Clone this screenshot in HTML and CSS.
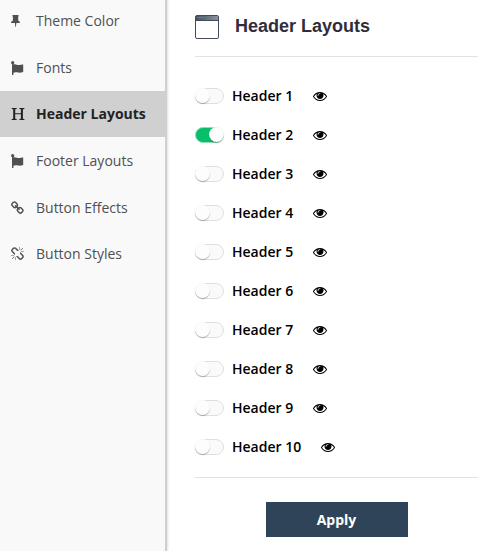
FILE: index.html
```html
<!DOCTYPE html>
<html lang="en">
<head>
<meta charset="utf-8">
<title>Header Layouts</title>
<link rel="stylesheet" href="styles.css">
</head>
<body>
<svg class="defs" aria-hidden="true">
  <symbol id="eye" viewBox="0 0 1792 1792"><path d="M1664 960q-152-236-381-353 61 104 61 225 0 185-131.5 316.5t-316.5 131.5-316.5-131.5-131.5-316.5q0-121 61-225-229 117-381 353 133 205 333.5 326.5t434.5 121.5 434.5-121.5 333.5-326.5zm-720-384q0-20-14-34t-34-14q-125 0-214.5 89.5t-89.5 214.5q0 20 14 34t34 14 34-14 14-34q0-86 61-147t147-61q20 0 34-14t14-34zm848 384q0 34-20 69-140 230-376.5 368.5t-499.5 138.5-499.5-139-376.5-368q-20-35-20-69t20-69q140-229 376.5-368t499.5-139 499.5 139 376.5 368q20 35 20 69z"/></symbol>
  <symbol id="flag" viewBox="0 0 14 14"><circle cx="1.700" cy="1.700" r="1.600"/><path d="M1 2h1.400v12H1zM2.400 3.600c2.200-.9 3.400.5 5.400.5 1.800 0 2.800-.7 4.400-.7v7.700c-2 .5-3.300.7-5 .4-2-.4-3.200-.5-4.800.3z"/></symbol>
</svg>
<div class="app">
  <nav class="sidebar">
    <a class="item"><svg class="icon" viewBox="0 0 14 14"><path d="M1.500 1h6v1.400H7.200v4c1 .4 1.800 1.200 1.800 2.600H5.400L4.800 13h-.4L3.900 9H0c0-1.400.8-2.200 1.900-2.600v-4h-.4z"/></svg><span>Theme Color</span></a>
    <a class="item"><svg class="icon"><use href="#flag"/></svg><span>Fonts</span></a>
    <a class="item active"><svg class="icon" viewBox="0 0 14 14"><path d="M.7 1h5v.9l-1.500.3v4h5.700v-4L8.400 1.900V1h5v.9l-1.500.3v9.600l1.500.3v.9h-5v-.9l1.500-.3V7.200H4.200v4.600l1.500.3v.9h-5v-.9l1.500-.3V2.200L.7 1.900z"/></svg><span>Header Layouts</span></a>
    <a class="item"><svg class="icon"><use href="#flag"/></svg><span>Footer Layouts</span></a>
    <a class="item"><svg class="icon" viewBox="80 0 1792 1792"><path d="M1520 1216q0-40-28-68l-208-208q-28-28-68-28-42 0-72 32 3 3 19 18.500t21.500 21.500 15 19 13 25.500 3.500 27.500q0 40-28 68t-68 28q-15 0-27.500-3.500t-25.500-13-19-15-21.500-21.500-18.500-19q-33 31-33 73 0 40 28 68l206 207q27 27 68 27 40 0 68-26l147-146q28-28 28-67zm-703-705q0-40-28-68l-206-207q-28-28-68-28-39 0-68 27l-147 146q-28 28-28 67 0 40 28 68l208 208q27 27 68 27 42 0 72-31-3-3-19-18.500t-21.500-21.500-15-19-13-25.500-3.500-27.500q0-40 28-68t68-28q15 0 27.500 3.500t25.500 13 19 15 21.500 21.500 18.500 19q33-31 33-73zm895 705q0 120-85 203l-147 146q-83 83-203 83-121 0-204-85l-206-207q-83-83-83-203 0-123 88-209l-88-88q-86 88-208 88-120 0-204-84l-208-208q-84-84-84-204t85-203l147-146q83-83 203-83 121 0 204 85l206 207q83 83 83 203 0 123-88 209l88 88q86-88 208-88 120 0 204 84l208 208q84 84 84 204z"/></svg><span>Button Effects</span></a>
    <a class="item"><svg class="icon" viewBox="0 0 1792 1792"><path d="M439 1271l-256 256q-11 9-23 9t-23-9q-9-10-9-23t9-23l256-256q10-9 23-9t23 9q9 10 9 23t-9 23zm169 41v320q0 14-9 23t-23 9-23-9-9-23v-320q0-14 9-23t23-9 23 9 9 23zm-224-224q0 14-9 23t-23 9h-320q-14 0-23-9t-9-23 9-23 23-9h320q14 0 23 9t9 23zm1264 128q0 120-85 203l-147 146q-83 83-203 83-121 0-204-85l-334-335q-21-21-42-56l239-18 273 274q28 28 68 28.500t68-27.500l147-146q28-28 28-67 0-40-28-68l-274-275 18-239q35 21 56 42l336 336q84 86 84 204zm-617-724l-239 18-273-274q-28-28-68-28-39 0-68 27l-147 146q-28 28-28 67 0 40 28 68l274 274-18 240q-35-21-56-42l-336-336q-84-86-84-204 0-120 85-203l147-146q83-83 203-83 121 0 204 85l334 335q21 21 42 56zm633 84q0 14-9 23t-23 9h-320q-14 0-23-9t-9-23 9-23 23-9h320q14 0 23 9t9 23zm-544-544v320q0 14-9 23t-23 9-23-9-9-23v-320q0-14 9-23t23-9 23 9 9 23zm407 151l-256 256q-11 9-23 9t-23-9q-9-10-9-23t9-23l256-256q10-9 23-9t23 9q9 10 9 23t-9 23z"/></svg><span>Button Styles</span></a>
  </nav>
  <main class="panel">
    <header class="heading">
      <svg class="window" viewBox="0 0 24 24"><defs><linearGradient id="bar"><stop stop-color="#46515f"/><stop offset="1" stop-color="#8b949e"/></linearGradient></defs><rect x=".5" y=".5" width="23" height="23" rx="1.500" fill="#fff" stroke="#414b59"/><path fill="url(#bar)" d="M1 1h22v4H1z"/><path stroke="#414b59" d="M1 5.500h22"/><path stroke="#8c959f" stroke-dasharray="1 1" d="M2.500 2.500h6"/></svg>
      <h1>Header Layouts</h1>
    </header>
    <div class="options">
      <div class="option"><i class="switch"></i><span>Header 1</span><svg class="eye"><use href="#eye"/></svg></div>
      <div class="option"><i class="switch on"></i><span>Header 2</span><svg class="eye"><use href="#eye"/></svg></div>
      <div class="option"><i class="switch"></i><span>Header 3</span><svg class="eye"><use href="#eye"/></svg></div>
      <div class="option"><i class="switch"></i><span>Header 4</span><svg class="eye"><use href="#eye"/></svg></div>
      <div class="option"><i class="switch"></i><span>Header 5</span><svg class="eye"><use href="#eye"/></svg></div>
      <div class="option"><i class="switch"></i><span>Header 6</span><svg class="eye"><use href="#eye"/></svg></div>
      <div class="option"><i class="switch"></i><span>Header 7</span><svg class="eye"><use href="#eye"/></svg></div>
      <div class="option"><i class="switch"></i><span>Header 8</span><svg class="eye"><use href="#eye"/></svg></div>
      <div class="option"><i class="switch"></i><span>Header 9</span><svg class="eye"><use href="#eye"/></svg></div>
      <div class="option"><i class="switch"></i><span>Header 10</span><svg class="eye"><use href="#eye"/></svg></div>
    </div>
    <footer class="actions"><button class="apply">Apply</button></footer>
  </main>
</div>
</body>
</html>
```
FILE: styles.css
```css
* { box-sizing: border-box; }
body { margin: 0; background: #fff; font: 14px/20px "Open Sans", sans-serif; overflow: hidden; }
.defs { position: absolute; width: 0; height: 0; }
.app { display: flex; height: 551px; }
.sidebar {
  width: 167px;
  background: #f9f9f9;
  border-right: 2px solid #d0d0d0;
  box-shadow: 1px 0 2px rgba(0, 0, 0, .12);
  margin-top: -2.300px;
}
.item {
  display: flex;
  align-items: center;
  gap: 11px;
  height: 46.667px;
  padding-left: 11px;
  color: #505050;
}
.item.active { background: #d0d0d0; color: #222; font-weight: 700; height: 46px; margin-bottom: .667px; }
.icon { width: 14px; height: 14px; fill: currentColor; }
.panel { width: 283px; margin-left: 28px; }
.heading {
  display: flex;
  align-items: center;
  gap: 16px;
  height: 57px;
  padding-bottom: 3px;
  border-bottom: 1px solid #e2e2e2;
}
.window { width: 24px; height: 24px; }
h1 { margin: 0 0 2px; font: 700 18px/22px "Liberation Sans", sans-serif; color: #2f2d3b; }
.options { padding: 19px 0 11px; border-bottom: 1px solid #e2e2e2; }
.option { display: flex; align-items: center; height: 39px; font-weight: 600; color: #000; }
.switch {
  width: 29px;
  height: 16px;
  margin-right: 8px;
  border: 1px solid #dfdfdf;
  border-radius: 8px;
  background: #fafafa;
}
.switch::before {
  content: "";
  display: block;
  width: 15px;
  height: 15px;
  margin: -1px 0 0 -1px;
  border-radius: 50%;
  background: #fdfdfd;
  box-shadow: 0 1px 1px rgba(0, 0, 0, .28);
}
.switch.on { background: #06bf68; border-color: #8fdcb7; }
.switch.on::before { margin-left: 13px; }
.eye { width: 14px; height: 14px; margin-left: 20px; }
.actions { display: flex; justify-content: center; padding-top: 24px; }
.apply {
  width: 142px;
  height: 35px;
  border: 0;
  padding: 0;
  background: #304459;
  color: #fff;
  font: 700 14px/20px "Open Sans", sans-serif;
}
```
